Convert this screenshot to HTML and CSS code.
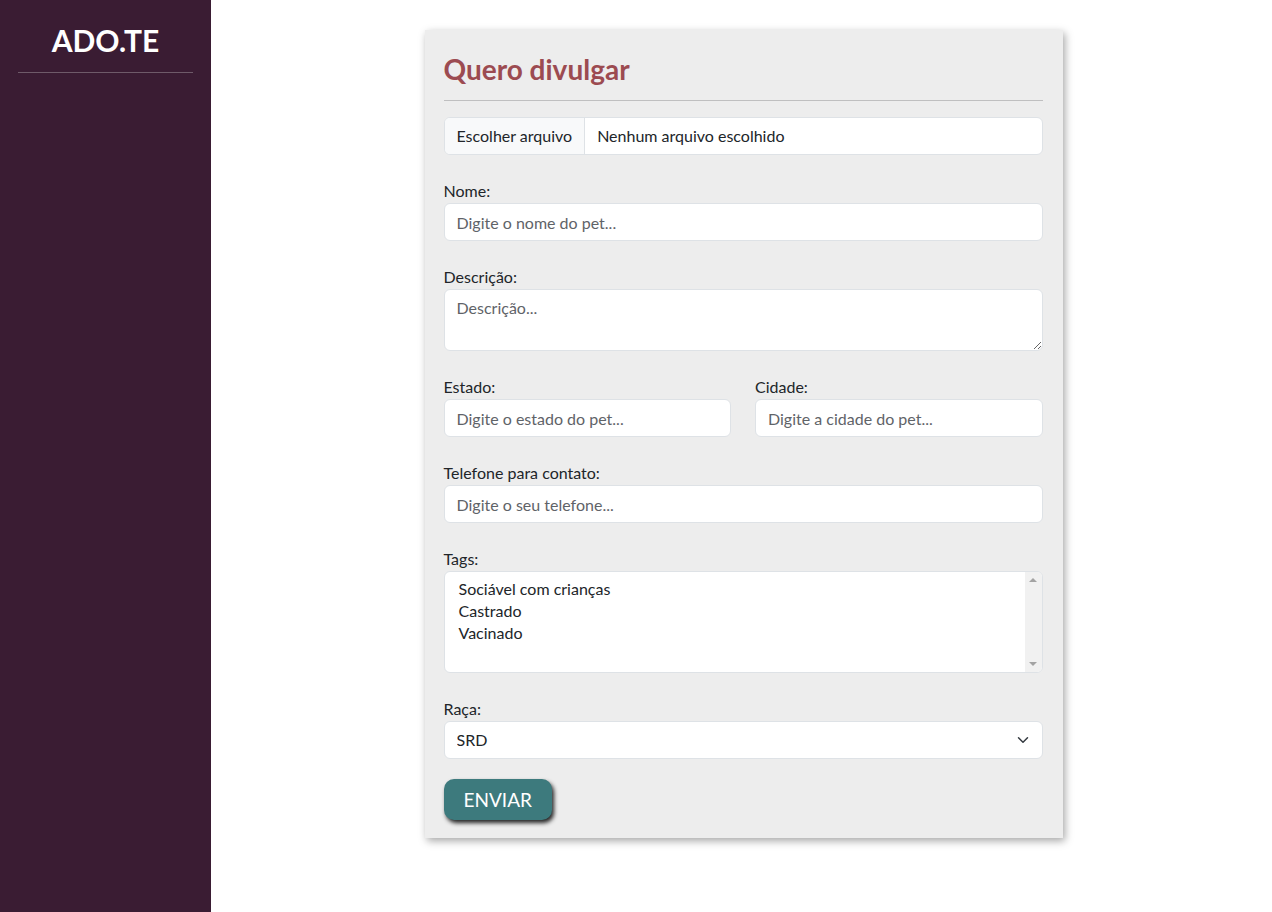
FILE: index.html
```html
<!DOCTYPE html>
<html lang="pt-BR">
<head>
<meta charset="utf-8">
<title>ADO.TE - Quero divulgar</title>
<link rel="stylesheet" href="styles.css">
</head>
<body>
<div class="layout">
  <aside class="sidebar">
    <h1 class="brand">ADO.TE</h1>
    <hr class="brand-rule">
  </aside>
  <main class="main">
    <form class="card">
      <h2 class="card-title">Quero divulgar</h2>
      <hr class="card-rule">
      <div class="file-input">
        <span class="file-btn">Escolher arquivo</span>
        <span class="file-name">Nenhum arquivo escolhido</span>
      </div>

      <div class="field">
        <label class="label">Nome:</label>
        <input class="control" type="text" placeholder="Digite o nome do pet...">
      </div>

      <div class="field">
        <label class="label">Descrição:</label>
        <textarea class="control textarea" rows="2" placeholder="Descrição..."></textarea>
      </div>

      <div class="row">
        <div class="field">
          <label class="label">Estado:</label>
          <input class="control" type="text" placeholder="Digite o estado do pet...">
        </div>
        <div class="field">
          <label class="label">Cidade:</label>
          <input class="control" type="text" placeholder="Digite a cidade do pet...">
        </div>
      </div>

      <div class="field">
        <label class="label">Telefone para contato:</label>
        <input class="control" type="text" placeholder="Digite o seu telefone...">
      </div>

      <div class="field">
        <label class="label">Tags:</label>
        <div class="listbox">
          <div class="options">
            <div class="option">Sociável com crianças</div>
            <div class="option">Castrado</div>
            <div class="option">Vacinado</div>
          </div>
          <div class="scrollbar">
            <span class="arrow arrow-up"></span>
            <span class="arrow arrow-down"></span>
          </div>
        </div>
      </div>

      <div class="field">
        <label class="label">Raça:</label>
        <div class="select-wrap">
          <select class="control select">
            <option>SRD</option>
          </select>
          <svg class="chevron" width="16" height="12" viewBox="0 0 16 16"><path d="m2 5 6 6 6-6" fill="none" stroke="#343a40" stroke-width="2" stroke-linecap="round" stroke-linejoin="round"/></svg>
        </div>
      </div>

      <button type="button" class="submit">ENVIAR</button>
    </form>
  </main>
</div>
</body>
</html>
```

FILE: styles.css
```css
* { box-sizing: border-box; }

html, body {
  margin: 0;
  height: 100%;
}

body {
  font-family: "Lato", "Noto Sans", sans-serif;
  font-size: 16px;
  line-height: 24px;
  color: #212529;
  background: #ffffff;
}

.layout {
  display: flex;
  min-height: 100vh;
}

.sidebar {
  width: 211px;
  flex: 0 0 211px;
  background: #3a1c33;
  padding: 18px 18px 0;
}

.brand {
  margin: 0;
  text-align: center;
  color: #ffffff;
  font-size: 30px;
  line-height: 44px;
  font-weight: 700;
}

.brand-rule {
  margin: 10px 0 0;
  border: 0;
  border-top: 1px solid #6e5a69;
}

.main {
  flex: 1;
  display: flex;
  justify-content: center;
  align-items: flex-start;
  padding: 30px 0 0 4px;
}

.card {
  width: 638px;
  background: #ededed;
  padding: 20px 20px 18px 19px;
  box-shadow: 2px 3px 8px rgba(0, 0, 0, 0.35);
}

.card-title {
  margin: 0 0 12px;
  font-size: 28px;
  line-height: 38px;
  font-weight: 700;
  color: #9c4b51;
}

.card-rule {
  margin: 0 0 16px;
  border: 0;
  border-top: 1px solid #bfbfc0;
}

.file-input {
  display: flex;
  height: 38px;
  border: 1px solid #dee2e6;
  border-radius: 6px;
  background: #ffffff;
  overflow: hidden;
}

.file-btn {
  padding: 6px 12px;
  background: #f8f9fa;
  border-right: 1px solid #dee2e6;
}

.file-name {
  padding: 6px 12px;
}

.field {
  margin-top: 24px;
  display: flex;
  flex-direction: column;
}

.label {
  display: block;
  line-height: 24px;
}

.control {
  display: block;
  width: 100%;
  height: 38px;
  padding: 6px 12px;
  font: inherit;
  color: #212529;
  background: #ffffff;
  border: 1px solid #dee2e6;
  border-radius: 6px;
  outline: none;
}

.control::placeholder {
  color: #5f6368;
  opacity: 1;
}

.textarea {
  height: 62px;
  resize: vertical;
}

.row {
  display: grid;
  grid-template-columns: 1fr 1fr;
  column-gap: 24px;
}

.listbox {
  display: flex;
  height: 102px;
  background: #ffffff;
  border: 1px solid #dee2e6;
  border-radius: 6px;
  overflow: hidden;
}

.options {
  flex: 1;
  padding: 6px 14px;
}

.option {
  line-height: 22px;
}

.scrollbar {
  width: 17px;
  background: #f1f1f1;
  display: flex;
  flex-direction: column;
  justify-content: space-between;
  align-items: center;
  padding: 6px 0;
}

.arrow {
  width: 0;
  height: 0;
  border-left: 4px solid transparent;
  border-right: 4px solid transparent;
}

.arrow-up { border-bottom: 4px solid #a3a3a3; }
.arrow-down { border-top: 4px solid #a3a3a3; }

.select-wrap {
  position: relative;
}

.select {
  appearance: none;
  -webkit-appearance: none;
  padding-right: 36px;
}

.chevron {
  position: absolute;
  right: 12px;
  top: 13px;
  pointer-events: none;
}

.submit {
  align-self: flex-start;
  margin-top: 20px;
  height: 41px;
  padding: 0 20px;
  font: inherit;
  font-size: 19px;
  color: #ffffff;
  background: #3d7a7d;
  border: 0;
  border-radius: 10px;
  box-shadow: 2px 3px 4px rgba(0, 0, 0, 0.85);
}
```
